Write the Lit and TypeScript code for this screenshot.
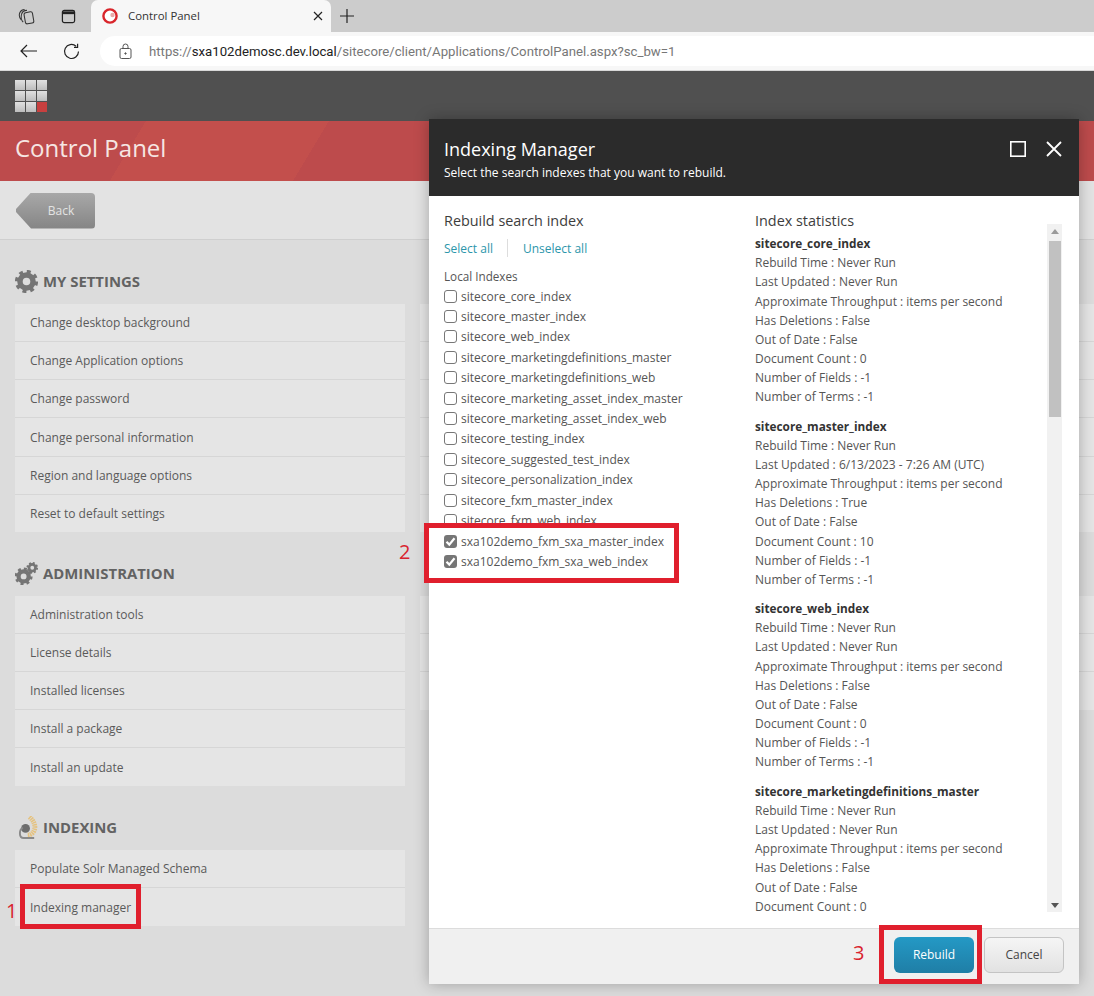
import { LitElement, html, css, svg } from "lit";
import { customElement } from "lit/decorators.js";

const gear = (cx: number, cy: number, r: number, color = "#757575") => {
  const c = 2 * Math.PI * (r * 0.92);
  const d = c / 16;
  return svg`<circle cx=${cx} cy=${cy} r=${r * 0.62} fill="none" stroke=${color} stroke-width=${r * 0.52}></circle>
  <circle cx=${cx} cy=${cy} r=${r * 0.92} fill="none" stroke=${color} stroke-width=${r * 0.36} stroke-dasharray="${d} ${d}"></circle>`;
};

const SECTIONS = [
  {
    title: "MY SETTINGS", icon: "gear", extra: 6,
    rows: ["Change desktop background", "Change Application options", "Change password", "Change personal information", "Region and language options", "Reset to default settings"],
  },
  {
    title: "ADMINISTRATION", icon: "gears", extra: 3,
    rows: ["Administration tools", "License details", "Installed licenses", "Install a package", "Install an update"],
  },
  { title: "INDEXING", icon: "index", extra: 0, rows: ["Populate Solr Managed Schema", "Indexing manager"] },
];

const INDEXES = [
  "sitecore_core_index", "sitecore_master_index", "sitecore_web_index", "sitecore_marketingdefinitions_master",
  "sitecore_marketingdefinitions_web", "sitecore_marketing_asset_index_master", "sitecore_marketing_asset_index_web",
  "sitecore_testing_index", "sitecore_suggested_test_index", "sitecore_personalization_index",
  "sitecore_fxm_master_index", "sitecore_fxm_web_index",
];

const STATS = [
  { name: "sitecore_core_index", updated: "Never Run", del: "False", docs: "0", full: true },
  { name: "sitecore_master_index", updated: "6/13/2023 - 7:26 AM (UTC)", del: "True", docs: "10", full: true },
  { name: "sitecore_web_index", updated: "Never Run", del: "False", docs: "0", full: true },
  { name: "sitecore_marketingdefinitions_master", updated: "Never Run", del: "False", docs: "0", full: false },
];

@customElement("app-root")
export class AppRoot extends LitElement {
  static styles = css`
    :host { display: block; position: relative; width: 1094px; height: 996px; overflow: hidden; background: #dcdcdc; font-family: "Open Sans", sans-serif; color: #444; }
    .tabs { height: 32px; background: #cccccc; display: flex; align-items: center; }
    .tab-ic { width: 42px; display: flex; justify-content: center; flex: none; }
    .tabs .first { margin-left: 5px; }
    .tab { width: 240px; height: 32px; margin-left: 2px; background: #f7f7f7; border-radius: 7px 7px 0 0; display: flex; align-items: center; padding: 0 8px 0 11px; box-sizing: border-box; font-size: 11.4px; color: #333; }
    .tab span { margin-left: 10px; flex: 1; padding-bottom: 2px; }
    .plus { margin-left: 9px; display: flex; }
    .toolbar { height: 38px; background: #f7f7f7; display: flex; align-items: center; border-bottom: 1px solid #d8d8d8; box-sizing: content-box; }
    .nav { width: 42px; display: flex; justify-content: center; flex: none; }
    .toolbar .nav:first-child { margin-left: 7px; }
    .nav.reload { padding-left: 2px; box-sizing: border-box; }
    .addr { margin-left: 9px; flex: 1; height: 30px; background: #fff; border-radius: 15px 0 0 15px; display: flex; align-items: center; padding-left: 19px; font-family: Roboto, sans-serif; font-size: 13.2px; color: #777; white-space: nowrap; }
    .addr b { font-weight: 400; color: #222; }
    .addr span { margin-left: 17px; }
    .dark { height: 50px; background: #505050; display: flex; align-items: center; padding-left: 15px; }
    .apps { display: grid; grid-template-columns: repeat(3, 10px); grid-auto-rows: 10px; gap: 1px; }
    .apps i { background: linear-gradient(#e0e0e0, #bdbdbd); }
    .apps i.on { background: #c8403f; }
    .red { height: 60px; box-sizing: border-box; padding: 0 0 8px 15px; display: flex; align-items: center; color: #f6e6e3; font-size: 24px; background: linear-gradient(121deg, #bd4b4c 0 125px, #c34f4c 125px 282px, #bd4b4c 282px); }
    .backbar { height: 59px; background: #e3e3e3; box-sizing: border-box; border-bottom: 1px solid #cfcfcf; display: flex; align-items: center; padding-left: 15px; }
    .back { width: 80px; height: 36px; border-radius: 0 4px 4px 0; background: linear-gradient(#a8a8a8, #858585); clip-path: polygon(16px 0, 100% 0, 100% 100%, 16px 100%, 1px 54%, 1px 46%); display: flex; align-items: center; justify-content: center; padding-left: 12px; box-sizing: border-box; color: #e3e3e3; font-size: 12px; margin-top: 1px; }
    .main { padding: 26px 0 0 15px; }
    .section { display: grid; grid-template-columns: 390px 674px; column-gap: 15px; margin-bottom: 26px; }
    .head { grid-column: 1 / 3; height: 38px; box-sizing: border-box; padding-bottom: 8px; display: flex; align-items: center; gap: 5px; font-size: 14.9px; font-weight: 700; color: #636363; }
    .head svg { width: 23px; height: 23px; flex: none; }
    .rows { display: flex; flex-direction: column; }
    .row { height: 38px; box-sizing: border-box; background: #e5e5e5; border-bottom: 1px solid #d6d6d6; padding-left: 15px; display: flex; align-items: center; font-size: 12px; color: #5a5a5a; }
    .row:last-child { border-bottom: 0; }
    .my .row:nth-child(4) { height: 39px; }
    .my .row:last-child { height: 37px; }
    .modal { position: absolute; left: 429px; top: 119px; width: 650px; height: 865px; display: flex; flex-direction: column; background: #fff; box-shadow: 0 0 14px rgba(0,0,0,.28); }
    .mhead { height: 77px; flex: none; background: #2b2b2b; color: #fff; padding: 18px 15px 0; box-sizing: border-box; position: relative; }
    .mhead h1 { margin: 0; font-size: 18px; line-height: 24px; font-weight: 400; }
    .mhead p { margin: 3px 0 0; font-size: 12px; line-height: 17px; }
    .winbtns { position: absolute; right: 17px; top: 22px; display: flex; gap: 20px; align-items: center; }
    .mbody { flex: 1; min-height: 0; display: flex; }
    .left { width: 311px; flex: none; padding: 15px 0 0 15px; box-sizing: border-box; position: relative; overflow: hidden; }
    h2 { margin: 0; font-size: 14.4px; font-weight: 400; line-height: 20px; color: #3d3d3d; }
    .links { display: flex; align-items: center; margin-top: 7px; height: 20px; font-size: 12px; color: #2c96ab; }
    .links i { width: 1px; height: 18px; background: #ddd; margin: 0 15px 0 14px; }
    .local { margin-top: 9px; font-size: 11.7px; line-height: 19px; color: #555; }
    .cb { display: flex; align-items: center; gap: 4px; height: 20.4px; font-size: 12px; color: #555; white-space: nowrap; }
    .cb i { width: 13px; height: 13px; box-sizing: border-box; border: 1px solid #777; border-radius: 3px; background: #fff; flex: none; display: flex; }
    .cb i.on { background: #767676; border: 0; }
    .right { flex: 1; min-width: 0; padding: 15px 0 0 15px; box-sizing: border-box; display: flex; flex-direction: column; }
    .stats { margin-top: 3px; flex: 1; }
    .stat { margin-bottom: 10px; font-size: 12px; line-height: 19.17px; color: #555; white-space: nowrap; }
    .stat b { display: block; font-weight: 700; color: #333; font-size: 11.8px; }
    .scroll { width: 15px; flex: none; margin: 28px 17px 16px 0; background: #f1f1f1; display: flex; flex-direction: column; align-items: center; justify-content: space-between; padding: 5px 0 4px; box-sizing: border-box; position: relative; }
    .thumb { position: absolute; left: 2px; right: 1px; top: 17px; height: 176px; background: #c1c1c1; }
    .up { width: 0; height: 0; border: 4px solid transparent; border-top: 0; border-bottom: 5px solid #9a9a9a; }
    .down { width: 0; height: 0; border: 4px solid transparent; border-bottom: 0; border-top: 5px solid #555; }
    .mfoot { height: 56px; flex: none; background: #f0f0f0; border-top: 1px solid #dcdcdc; box-sizing: border-box; display: flex; justify-content: flex-end; align-items: center; gap: 10px; padding: 0 15px 3px 0; }
    .btn { width: 80px; height: 36px; box-sizing: border-box; border-radius: 6px; display: flex; align-items: center; justify-content: center; padding-bottom: 1px; font-size: 12px; }
    .primary { background: linear-gradient(#2499c5, #1f7ea6); color: #fff; }
    .cancel { background: linear-gradient(#f5f5f5, #e2e2e2); border: 1px solid #c4c4c4; color: #444; }
    .mark { position: absolute; border: 5px solid #e01f2d; box-sizing: border-box; }
    .num { position: absolute; color: #d9232e; font-size: 20px; line-height: 24px; }
    .m1 { left: 20px; top: 884px; width: 121px; height: 45px; }
    .m2 { left: 424px; top: 523px; width: 255px; height: 60px; background: #fff; padding: 3px 0 0 15px; }
    .m3 { left: 879px; top: 925px; width: 103px; height: 59px; }
    .n1 { left: 6px; top: 899px; }
    .n2 { left: 399px; top: 540px; }
    .n3 { left: 853px; top: 941px; }
  `;

  private icon(name: string) {
    if (name === "gear") return html`<svg viewBox="0 0 24 24">${gear(12, 12, 11)}</svg>`;
    if (name === "gears") return html`<svg viewBox="0 0 24 24">${gear(9, 15, 8.5)}${gear(18, 6, 5.5)}</svg>`;
    return html`<svg viewBox="0 0 24 24" fill="none">
      <path d="M15 1C20 5 22 11 20 15 19 18 16 20 13 20" stroke="#e5c27f" stroke-width="5" stroke-dasharray="1.6 .7"></path>
      <circle cx="11" cy="13" r="4.6" fill="#6d6d6d"></circle>
      <path d="M8 12C4 15 4 23 9 23H20" stroke="#8a8a8a" stroke-width="2"></path>
    </svg>`;
  }

  private check() {
    return html`<svg viewBox="0 0 13 13" width="13" height="13"><path d="M2.5 6.8l2.8 2.8 5.2-6.4" fill="none" stroke="#fff" stroke-width="2.2"></path></svg>`;
  }

  render() {
    return html`
      <div class="tabs">
        <div class="tab-ic first"><svg width="17" height="17" viewBox="0 0 18 18" fill="none" stroke="#333" stroke-width="1.1"><rect x="7" y="4.5" width="9" height="12" rx="2" transform="rotate(-10 11 10)"></rect><path d="M5.5 15C3.5 13 3 9 3.8 6.5 4.5 4 7 2.5 9.5 2.5"></path><path d="M3.5 12.5C1.3 10 1 7 2 4.8 3 2.8 5 1.6 7 1.6"></path></svg></div>
        <div class="tab-ic"><svg width="15" height="15" viewBox="0 0 16 16" fill="none"><rect x="1.5" y="1.5" width="13" height="13" rx="2" stroke="#222" stroke-width="1.3"></rect><path d="M2 2.5h12v3H2z" fill="#222"></path></svg></div>
        <div class="tab">
          <svg width="16" height="16" viewBox="0 0 16 16"><circle cx="8" cy="8" r="6.6" fill="#fff" stroke="#d9252b" stroke-width="2.4"></circle><circle cx="10.5" cy="7" r="2.2" fill="#e9a9a9"></circle></svg>
          <span>Control Panel</span>
          <svg width="10" height="10" viewBox="0 0 10 10" stroke="#222" stroke-width="1.2"><path d="M1 1l8 8M9 1l-8 8"></path></svg>
        </div>
        <div class="plus"><svg width="14" height="14" viewBox="0 0 14 14" stroke="#222" stroke-width="1.2"><path d="M7 0v14M0 7h14"></path></svg></div>
      </div>
      <div class="toolbar">
        <div class="nav"><svg width="17" height="14" viewBox="0 0 17 14" fill="none" stroke="#222" stroke-width="1.2"><path d="M17 7H1M7 1L1 7l6 6"></path></svg></div>
        <div class="nav reload"><svg width="17" height="17" viewBox="0 0 17 17" fill="none" stroke="#222" stroke-width="1.2"><path d="M15.5 8.5a7 7 0 1 1-2.4-5.3"></path><path d="M14.6 .8v3.6H11"></path></svg></div>
        <div class="addr">
          <svg width="13" height="16" viewBox="0 0 13 16" fill="none" stroke="#555" stroke-width="1"><rect x="1" y="5.5" width="11" height="10" rx="1.5"></rect><path d="M4 5.5V3.5a2.5 2.5 0 0 1 5 0v2"></path><circle cx="6.5" cy="10.5" r=".7" fill="#555"></circle></svg>
          <span>https://<b>sxa102demosc.dev.local</b>/sitecore/client/Applications/ControlPanel.aspx?sc_bw=1</span>
        </div>
      </div>
      <div class="dark"><div class="apps">${[0, 1, 2, 3, 4, 5, 6, 7].map(() => html`<i></i>`)}<i class="on"></i></div></div>
      <div class="red">Control Panel</div>
      <div class="backbar"><div class="back">Back</div></div>
      <div class="main">
        ${SECTIONS.map((s, i) => html`
          <div class="section ${i === 0 ? "my" : ""}">
            <div class="head">${this.icon(s.icon)}${s.title}</div>
            <div class="rows">${s.rows.map((r) => html`<div class="row">${r}</div>`)}</div>
            <div class="rows">${Array.from({ length: s.extra }, () => html`<div class="row"></div>`)}</div>
          </div>`)}
      </div>

      <div class="modal">
        <div class="mhead">
          <h1>Indexing Manager</h1>
          <p>Select the search indexes that you want to rebuild.</p>
          <div class="winbtns">
            <svg width="16" height="16" viewBox="0 0 16 16" fill="none" stroke="#fff" stroke-width="1.6"><rect x=".8" y=".8" width="14.4" height="14.4"></rect></svg>
            <svg width="16" height="16" viewBox="0 0 16 16" fill="none" stroke="#fff" stroke-width="1.8"><path d="M1 1l14 14M15 1L1 15"></path></svg>
          </div>
        </div>
        <div class="mbody">
          <div class="left">
            <h2>Rebuild search index</h2>
            <div class="links"><span>Select all</span><i></i><span>Unselect all</span></div>
            <div class="local">Local Indexes</div>
            ${INDEXES.map((n) => html`<div class="cb"><i></i>${n}</div>`)}
          </div>
          <div class="right">
            <h2>Index statistics</h2>
            <div class="stats">
              ${STATS.map((s) => html`<div class="stat">
                <b>${s.name}</b>
                <div>Rebuild Time : Never Run</div>
                <div>Last Updated : ${s.updated}</div>
                <div>Approximate Throughput : items per second</div>
                <div>Has Deletions : ${s.del}</div>
                <div>Out of Date : False</div>
                <div>Document Count : ${s.docs}</div>
                ${s.full ? html`<div>Number of Fields : -1</div><div>Number of Terms : -1</div>` : ""}
              </div>`)}
            </div>
          </div>
          <div class="scroll"><i class="up"></i><div class="thumb"></div><i class="down"></i></div>
        </div>
        <div class="mfoot">
          <div class="btn primary">Rebuild</div>
          <div class="btn cancel">Cancel</div>
        </div>
      </div>

      <div class="mark m1"></div>
      <div class="mark m2">
        <div class="cb"><i class="on">${this.check()}</i>sxa102demo_fxm_sxa_master_index</div>
        <div class="cb"><i class="on">${this.check()}</i>sxa102demo_fxm_sxa_web_index</div>
      </div>
      <div class="mark m3"></div>
      <div class="num n1">1</div>
      <div class="num n2">2</div>
      <div class="num n3">3</div>
    `;
  }
}
